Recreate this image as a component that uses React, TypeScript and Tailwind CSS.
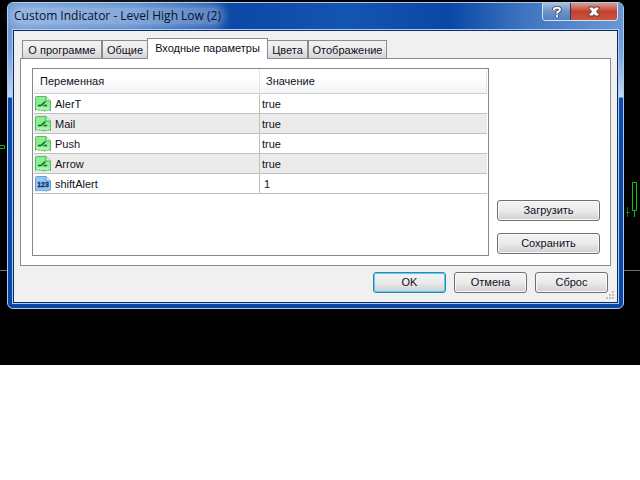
import React from 'react';
import clsx from 'clsx';

const tabs = [
  { label: 'О программе', width: 'w-20' },
  { label: 'Общие', width: 'w-[46px]' },
  { label: 'Входные параметры', width: 'w-[121px]', active: true },
  { label: 'Цвета', width: 'w-[41px]' },
  { label: 'Отображение', width: 'w-[79px]' },
];

const inputs = [
  { name: 'AlerT', value: 'true', type: 'bool' },
  { name: 'Mail', value: 'true', type: 'bool' },
  { name: 'Push', value: 'true', type: 'bool' },
  { name: 'Arrow', value: 'true', type: 'bool' },
  { name: 'shiftAlert', value: '1', type: 'int' },
];

const BoolIcon = () => (
  <svg width="16" height="16" viewBox="0 0 16 16" className="shrink-0" aria-hidden="true">
    <path
      d="M.5 1.5q0-1 1-1H11L15.500 5V15l-1.500-1.500-1.500 1-1.500-1-1.500 2-1.500-1.500-1.500 1-1.500-1.500-1.500 1-1.500-1.500L.5 14.500z"
      fill="#8bee92"
      stroke="#58b864"
    />
    <path d="M1.500 11.500h13v2l-1-.5-1.500 1-1.500-1-1.500 1.500-1.500-1-1.500 1-1.500-1.500-1.500 1-1.500-1z" fill="#b4f5b6" />
    <path d="M11 .5V5h4.500" fill="#d6fbd8" stroke="#4cae58" />
    <path d="M3 9.500h3M6 9.500l4.500-4M8.500 9.500H12" fill="none" stroke="#14662a" strokeWidth="1.600" />
  </svg>
);

const IntIcon = () => (
  <svg width="16" height="16" viewBox="0 0 16 16" className="shrink-0" aria-hidden="true">
    <path
      d="M.5 1.500q0-1 1-1H11L15.500 5V14l-1.500.5-1.500-1-1 2-1.500-1.500-2 1-1.500-1-1.500 1-1.500-1-1.500 1-1.500-.5z"
      fill="#93c6f1"
      stroke="#6a9fd0"
    />
    <path d="M11 .5V5h4.500" fill="#d8ebfc" stroke="#5c96cc" />
    <text x="8" y="11" textAnchor="middle" fontSize="7" fontWeight="700" fontFamily="Liberation Sans, sans-serif" fill="#0a2f6c" stroke="#0a2f6c" strokeWidth=".3">
      123
    </text>
  </svg>
);

type ButtonProps = {
  children: React.ReactNode;
  primary?: boolean;
  className?: string;
};

const Button = ({ children, primary, className }: ButtonProps) => (
  <button
    type="button"
    className={clsx(
      'h-[21px] rounded-[3px] border bg-linear-to-b from-[#f3f3f3] from-0% via-[#ebebeb] via-50% to-[#cfcfcf] text-center leading-[19px]',
      primary ? 'border-[#2f86b0] shadow-[inset_0_0_0_1px_#55cdf2]' : 'border-[#707070] shadow-[inset_0_0_0_1px_#f8f8f8]',
      className,
    )}
  >
    {children}
  </button>
);

// Price chart that stays visible around the dialog
const ChartBackground = () => (
  <>
    <div className="absolute inset-x-0 top-[270px] h-px bg-[#737380]" />
    <svg width="5" height="5" className="absolute top-[145px] left-0" aria-hidden="true">
      <path d="M0 .5h4.500v3H0" fill="none" stroke="#12b012" />
    </svg>
    <svg width="14" height="38" className="absolute top-[181px] right-0" aria-hidden="true">
      <path d="M1.500 26v10M0 31.500h4" fill="none" stroke="#0b7a0b" />
      <path d="M6.500 1.500h4v28h-4zM8.500 30v6" fill="none" stroke="#12c012" />
    </svg>
  </>
);

const TitleBar = () => (
  <header className="flex h-[26px] items-start justify-between pl-1.5 pr-[5px]">
    <h1 className="mt-[5px] rounded-full bg-white/30 font-['Open_Sans','Noto_Sans',sans-serif] text-[12px] leading-[16px] text-[#08122c] shadow-[0_0_8px_4px_rgba(255,255,255,0.3)]">
      Custom Indicator - Level High Low (2)
    </h1>
    <div className="flex h-[18px] overflow-hidden rounded-b-[4px] border border-t-0 border-[#d3e1f3]">
      <button
        type="button"
        aria-label="Справка"
        className="flex w-7 items-center justify-center border-r border-[#20386a] bg-linear-to-b from-[#a9c0df] from-0% via-[#6d92c4] via-50% to-[#5580bd]"
      >
        <svg width="10" height="12" viewBox="0 0 10 12" aria-hidden="true">
          <path d="M2 4V3.500Q2 1.800 5 1.800T8 3.800Q8 5 6.500 5.500T5 7.500M5 9v2" fill="none" stroke="#34405e" strokeWidth="3.600" />
          <path d="M2 4V3.500Q2 1.800 5 1.800T8 3.800Q8 5 6.500 5.500T5 7.500M5 9v2" fill="none" stroke="#fff" strokeWidth="2" />
        </svg>
      </button>
      <button
        type="button"
        aria-label="Закрыть"
        className="flex w-[46px] items-center justify-center bg-linear-to-b from-[#dc9a91] from-0% via-[#c4402c] via-50% to-[#c9553b]"
      >
        <svg width="12" height="11" viewBox="0 0 12 11" aria-hidden="true">
          <path d="M1 1h4l1 1.500L7 1h4v1.500L8.500 5.500 11 8.500V10H7L6 8.500 5 10H1V8.500L3.500 5.500 1 2.500z" fill="#fff" stroke="#5a3a42" />
        </svg>
      </button>
    </div>
  </header>
);

const InputsTable = () => (
  <div className="flex-1 border border-[#828790] bg-white px-px">
    <table className="w-full table-fixed border-separate border-spacing-0 text-left">
      <thead>
        <tr className="h-[25px] bg-linear-to-b from-white from-40% to-[#f1f2f4]">
          <th className="w-[226px] border-r border-b border-r-[#e0e3e8] border-b-[#d0d0d0] p-0 pl-1.5 font-normal">Переменная</th>
          <th className="border-r border-b border-r-[#e0e3e8] border-b-[#d0d0d0] p-0 pl-1.5 font-normal">Значение</th>
        </tr>
      </thead>
      <tbody>
        {inputs.map((input) => (
          <tr key={input.name} className="h-5 even:bg-[#ebebeb]">
            <td className="border-r border-b border-[#c0c0c0] p-0 pl-px">
              <div className="flex items-center gap-1">
                {input.type === 'bool' ? <BoolIcon /> : <IntIcon />}
                {input.name}
              </div>
            </td>
            <td className={clsx('border-b border-[#c0c0c0] p-0', input.type === 'bool' ? 'pl-0.5' : 'pl-1')}>{input.value}</td>
          </tr>
        ))}
      </tbody>
    </table>
  </div>
);

const SizeGrip = () => (
  <svg width="9" height="9" viewBox="0 0 9 9" className="absolute right-0.5 bottom-0.5" aria-hidden="true">
    <path d="M6 0h2v2H6zM3 3h2v2H3zM6 3h2v2H6zM0 6h2v2H0zM3 6h2v2H3zM6 6h2v2H6z" fill="#c2c2c2" />
  </svg>
);

export default function App() {
  return (
    <div className="min-h-screen bg-white font-['Liberation_Sans',Arial,sans-serif] text-[11px] leading-[14px] text-[#10101c]">
      <main className="relative bg-black pt-0.5 pr-4 pb-14 pl-[7px]">
        <ChartBackground />

        <section className="relative rounded-[6px] border border-[#a9cbf2] bg-[linear-gradient(180deg,#5c8dce_0,#7ba3da_50px,#c3d8f0_94px,#0d4bac_95px,#0a46a6_100%)]">
          <div className="rounded-t-[5px] bg-[linear-gradient(90deg,#6d9ad6_0%,#4f83ca_20%,#0c48a6_36%,#1454b2_55%,#0b48a6_72%,#3f74c0_84%,#6c97d2_100%)]">
            <TitleBar />
          </div>

          <div className="mx-1 mb-1 border border-[#a9cbf2]">
            <div className="relative border border-[#0c2b66] bg-[#f0f0f0] px-1.5 pt-[7px] pb-[9px]">
              <div role="tablist" className="flex h-5 items-end pl-0.5">
                {tabs.map((tab) => (
                  <button
                    key={tab.label}
                    type="button"
                    role="tab"
                    aria-selected={!!tab.active}
                    className={clsx(
                      'border border-b-0 border-[#898c95] text-center whitespace-nowrap',
                      tab.width,
                      tab.active
                        ? 'relative z-10 -mx-px -mb-px h-[21px] bg-white pb-0.5'
                        : 'h-[18px] bg-linear-to-b from-[#f2f2f2] from-0% via-[#ebebeb] via-50% to-[#d3d3d3]',
                    )}
                  >
                    {tab.label}
                  </button>
                ))}
              </div>

              <div role="tabpanel" className="flex h-52 gap-2 border border-[#898c95] bg-white py-[9px] pr-2.5 pl-[11px]">
                <InputsTable />
                <div className="flex w-[103px] flex-col justify-end gap-3 pb-0.5">
                  <Button>Загрузить</Button>
                  <Button>Сохранить</Button>
                </div>
              </div>

              <div className="flex justify-end gap-2 pt-1.5 pr-[3px]">
                <Button primary className="w-[73px]">OK</Button>
                <Button className="w-[73px]">Отмена</Button>
                <Button className="w-[73px]">Сброс</Button>
              </div>
              <SizeGrip />
            </div>
          </div>
        </section>
      </main>
    </div>
  );
}
